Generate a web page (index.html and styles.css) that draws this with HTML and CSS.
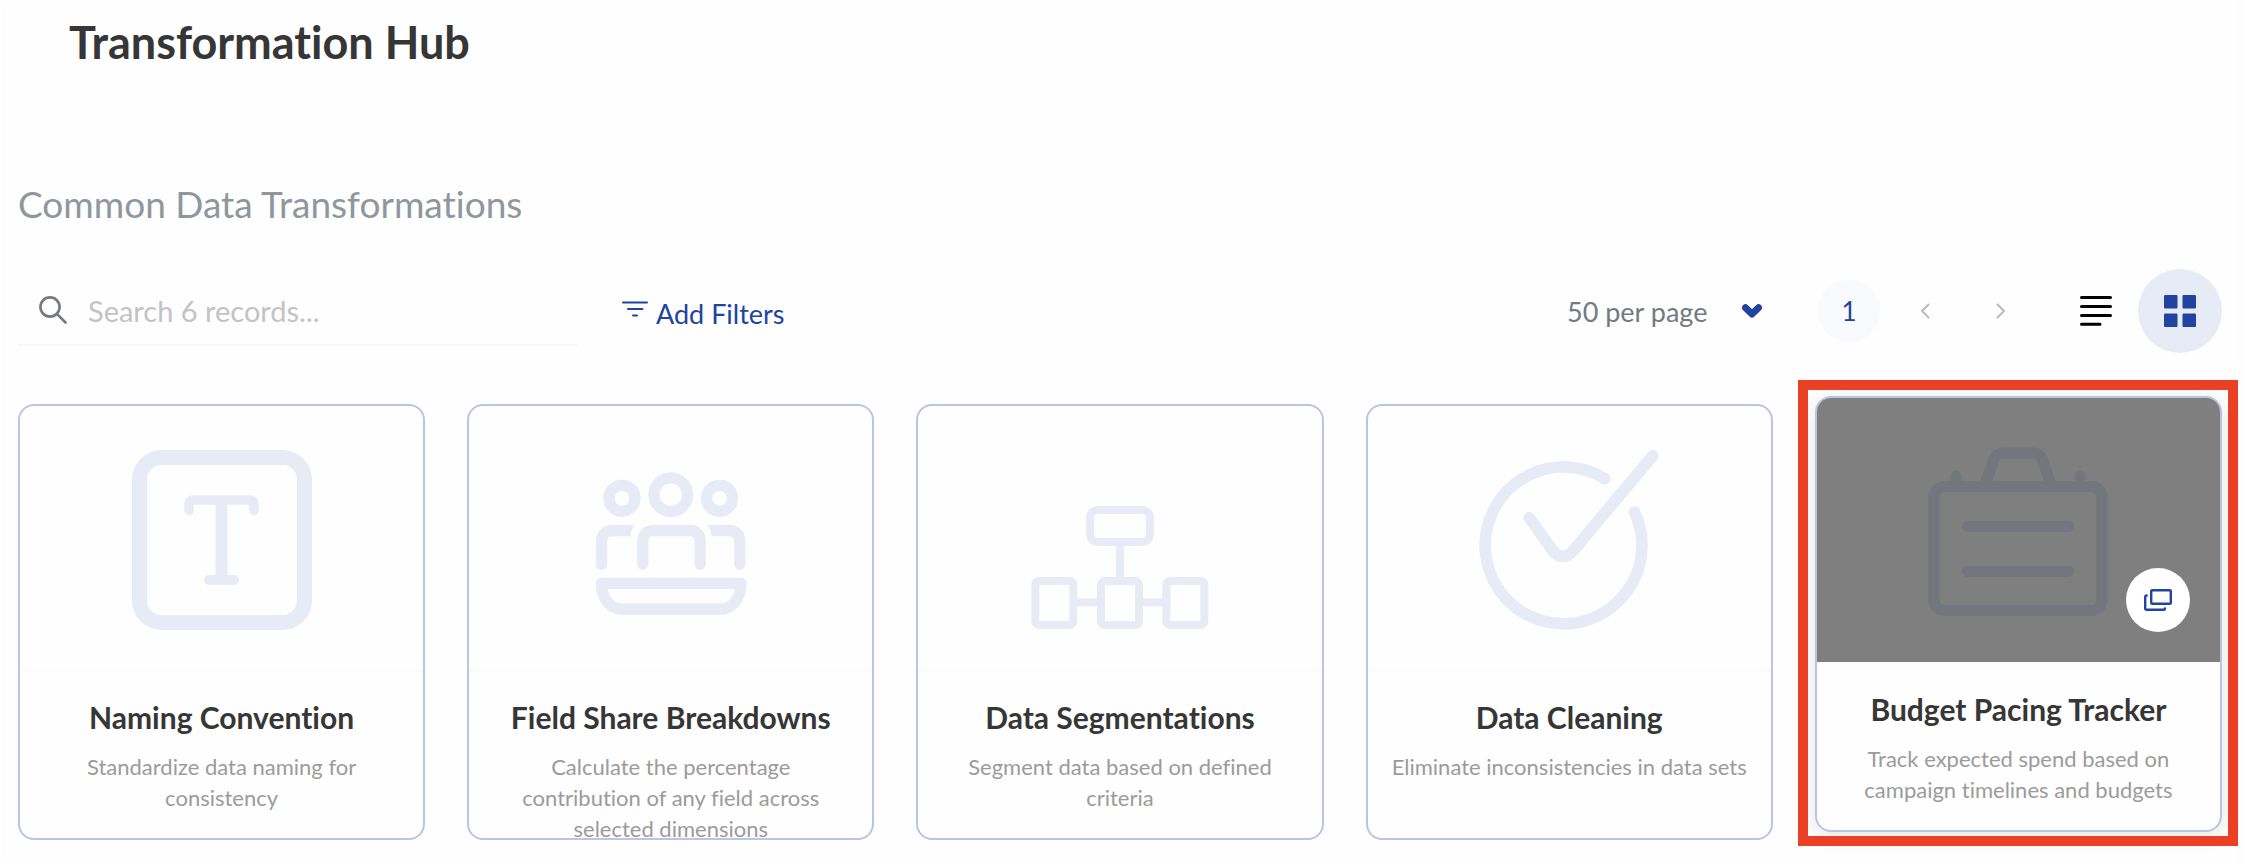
FILE: index.html
```html
<!DOCTYPE html>
<html lang="en">
<head>
<meta charset="utf-8">
<title>Transformation Hub</title>
<link rel="stylesheet" href="styles.css">
</head>
<body>
<main class="page">
  <h1 class="page-title">Transformation Hub</h1>
  <h2 class="section-title">Common Data Transformations</h2>

  <div class="toolbar">
    <label class="search">
      <svg class="search-icon" viewBox="0 0 28 28" aria-hidden="true"><circle cx="11" cy="11" r="9.6"/><path d="M18 18l8.5 8.5"/></svg>
      <input class="search-input" type="search" placeholder="Search 6 records..." aria-label="Search records">
    </label>
    <button class="filter-button" type="button">
      <svg class="filter-icon" viewBox="0 0 26 16" aria-hidden="true"><path d="M1 1.5h24M6 8h14.500M11 14.500h4"/></svg>
      Add Filters
    </button>

    <div class="controls">
      <div class="page-size">
        <select class="page-size-select" aria-label="Records per page"><option>50 per page</option></select>
        <svg class="page-size-arrow" viewBox="0 0 20 14" aria-hidden="true"><path d="M3.500 3.700L10 10L16.500 3.700"/></svg>
      </div>
      <nav class="pager" aria-label="Pages">
        <button class="pager-button pager-current" type="button">1</button>
        <button class="pager-button" type="button" aria-label="Previous page"><svg class="pager-icon" viewBox="0 0 8 14" aria-hidden="true"><path d="M7.500 .5L1 7l6.500 6.500"/></svg></button>
        <button class="pager-button" type="button" aria-label="Next page"><svg class="pager-icon" viewBox="0 0 8 14" aria-hidden="true"><path d="M.5 .5L7 7L.5 13.500"/></svg></button>
      </nav>
      <div class="views">
        <button class="view-button" type="button" aria-label="List view"><svg class="view-icon list-icon" viewBox="0 0 32 32" aria-hidden="true"><path d="M1.500 2.500h29M1.500 11.500h29M1.500 20.500h29M1.500 29.300h18.500"/></svg></button>
        <button class="view-button view-active" type="button" aria-label="Grid view"><svg class="view-icon grid-icon" viewBox="0 0 32 32" aria-hidden="true"><rect width="13.500" height="13.500" rx="1"/><rect x="18.500" width="13.500" height="13.500" rx="1"/><rect y="18.500" width="13.500" height="13.500" rx="1"/><rect x="18.500" y="18.500" width="13.500" height="13.500" rx="1"/></svg></button>
      </div>
    </div>
  </div>

  <ul class="cards">
    <li class="cell">
      <article class="card">
        <div class="art">
          <svg class="art-icon" viewBox="0 0 180 180" aria-hidden="true">
            <rect x="7.500" y="7.500" width="165" height="165" rx="22" stroke-width="15"/>
            <path d="M57 60.500V54Q57 50 61 50H118Q122 50 122 54V60.500" stroke-width="9.500"/>
            <path d="M89.500 50V130" stroke-width="12" stroke-linecap="butt"/>
            <path d="M77 130H102" stroke-width="10"/>
          </svg>
        </div>
        <div class="card-text">
          <h3 class="card-title">Naming Convention</h3>
          <p class="card-note">Standardize data naming for consistency</p>
        </div>
      </article>
    </li>
    <li class="cell">
      <article class="card">
        <div class="art">
          <svg class="art-icon" viewBox="0 0 180 180" stroke-width="11.300" aria-hidden="true">
            <circle cx="41" cy="48.300" r="13"/>
            <circle cx="89.800" cy="44.700" r="16.800"/>
            <circle cx="138.500" cy="48.300" r="13"/>
            <path d="M20.500 114.300V92Q20.500 80.500 32 80.500"/>
            <path class="solid" d="M32 75H53.500C51 78 49.500 82 49.500 86.200H30V75Z"/>
            <path d="M158.800 114.300V92Q158.800 80.500 147 80.500"/>
            <path class="solid" d="M148 75H126C129 78 130.500 82 130.500 86.200H149V75Z"/>
            <path d="M61.800 114.300V92Q61.800 80.500 73 80.500H108Q119.200 80.500 119.200 92V114.300"/>
            <path d="M20.500 133.300H160C160 148 152 159 139 159H41.500C28.500 159 20.500 148 20.500 133.300Z"/>
          </svg>
        </div>
        <div class="card-text">
          <h3 class="card-title">Field Share Breakdowns</h3>
          <p class="card-note">Calculate the percentage contribution of any field across selected dimensions</p>
        </div>
      </article>
    </li>
    <li class="cell">
      <article class="card">
        <div class="art">
          <svg class="art-icon" viewBox="0 0 180 180" stroke-width="8" aria-hidden="true">
            <rect x="60" y="60" width="60" height="32" rx="8"/>
            <path d="M90 94V129" stroke-linecap="butt"/>
            <rect x="5.300" y="131" width="38" height="44" rx="3.500"/>
            <rect x="71" y="131" width="38" height="44" rx="3.500"/>
            <rect x="136.300" y="131" width="38" height="44" rx="3.500"/>
            <path d="M43 152.500H71M109 152.500H136" stroke-linecap="butt"/>
          </svg>
        </div>
        <div class="card-text">
          <h3 class="card-title">Data Segmentations</h3>
          <p class="card-note">Segment data based on defined criteria</p>
        </div>
      </article>
    </li>
    <li class="cell">
      <article class="card">
        <div class="art">
          <svg class="art-icon" viewBox="0 0 180 180" stroke-width="11.700" aria-hidden="true">
            <path d="M125.800 28.700A78.400 78.400 0 1 0 155.500 62"/>
            <path d="M50.200 67.700L74 101Q84 112 94 101L173.800 5.700"/>
          </svg>
        </div>
        <div class="card-text">
          <h3 class="card-title">Data Cleaning</h3>
          <p class="card-note">Eliminate inconsistencies in data sets</p>
        </div>
      </article>
    </li>
    <li class="cell">
      <article class="card card-raised">
        <div class="art">
          <svg class="art-icon" viewBox="0 0 180 180" stroke-width="11.300" aria-hidden="true">
            <rect x="6" y="44.700" width="168" height="123.600" rx="10"/>
            <path d="M39.500 84.300H140.500M39.500 129.300H140.500"/>
            <path d="M28 34V42M152 34V42"/>
            <path d="M58 40L65.500 18Q68.500 11 75.500 11H104.500Q111.500 11 114.500 18L122 40"/>
          </svg>
          <div class="shade">
            <button class="copy-button" type="button" aria-label="Use template"><svg class="copy-icon" viewBox="0 0 28 22" aria-hidden="true"><rect x="7.200" y="1.200" width="19.600" height="13.600" rx="1"/><path d="M2.700 6.500Q1.200 6.500 1.200 8V19.300Q1.200 20.800 2.700 20.800H19.800Q21 20.800 21 19.500"/></svg></button>
          </div>
        </div>
        <div class="card-text">
          <h3 class="card-title">Budget Pacing Tracker</h3>
          <p class="card-note">Track expected spend based on campaign timelines and budgets</p>
        </div>
      </article>
      <div class="marker"></div>
    </li>
  </ul>
</main>
</body>
</html>
```
FILE: styles.css
```css
:root {
  --blue: #2044a0;
  --pale: #e7ebf6;
  --ink: #363636;
}

* {
  box-sizing: border-box;
}

body {
  margin: 0;
  background: #fefefe;
  font-family: Lato, "Open Sans", sans-serif;
  font-variant-ligatures: none;
  color: var(--ink);
}

button,
input,
select {
  font: inherit;
  color: inherit;
  border: 0;
  padding: 0;
  background: none;
  cursor: pointer;
}

svg {
  fill: none;
  stroke: currentColor;
  stroke-linecap: round;
  stroke-linejoin: round;
}

.page {
  min-height: 100vh;
  margin: 0 5px;
  padding: 12px 17px 18px 13px;
  box-shadow: 0 0 6px rgba(0, 0, 0, 0.03);
}

.page-title {
  margin: 0 0 108px 51px;
  font-size: 45px;
  line-height: 60px;
  font-weight: 700;
}

.section-title {
  margin: 0 0 41px;
  font-size: 37px;
  line-height: 48px;
  font-weight: 400;
  color: #8f979e;
}

.toolbar {
  display: flex;
  align-items: center;
  margin-bottom: 51px;
}

.search {
  display: flex;
  align-items: center;
  gap: 21px;
  flex: 0 1 560px;
  height: 70px;
  padding-left: 21px;
  border-bottom: 2px solid #f8f8f8;
}

.search-icon {
  flex: none;
  width: 28px;
  height: 28px;
  stroke-width: 2.6;
  color: #707b84;
}

.search-input {
  flex: 1;
  min-width: 0;
  outline: 0;
  font-size: 29px;
  cursor: text;
}

.search-input::placeholder {
  color: #c3c3c3;
  opacity: 1;
}

.filter-button {
  display: flex;
  align-items: center;
  gap: 8px;
  margin: 4px 0 0 44px;
  font-size: 27px;
  color: var(--blue);
}

.filter-icon {
  width: 26px;
  height: 16px;
  margin-bottom: 8px;
  stroke-width: 2;
}

.controls {
  display: flex;
  align-items: center;
  margin-left: auto;
}

.page-size {
  display: grid;
  align-items: center;
  margin-right: 56px;
  font-size: 27px;
  color: #707b84;
}

.page-size-select {
  grid-area: 1 / 1;
  padding-right: 54px;
  appearance: none;
}

.page-size-arrow {
  grid-area: 1 / 1;
  justify-self: end;
  width: 20px;
  height: 14px;
  stroke-width: 7;
  overflow: visible;
  color: var(--blue);
  pointer-events: none;
}

.pager {
  display: flex;
  gap: 14px;
}

.pager-button {
  display: grid;
  place-items: center;
  width: 62px;
  height: 62px;
  border-radius: 50%;
  font-size: 26px;
  color: #b9bcc0;
}

.pager-current {
  background: #f9fafd;
  color: var(--blue);
}

.pager-icon {
  width: 8px;
  height: 14px;
  stroke-width: 2;
  overflow: visible;
}

.views {
  display: flex;
  margin-left: 22px;
}

.view-button {
  display: grid;
  place-items: center;
  width: 84px;
  height: 84px;
  border-radius: 50%;
  color: #000;
}

.view-active {
  background: var(--pale);
  color: var(--blue);
}

.view-icon {
  width: 32px;
  height: 32px;
}

.list-icon {
  stroke-width: 3;
}

.grid-icon {
  fill: currentColor;
  stroke: none;
}

.cards {
  display: grid;
  grid-template-columns: repeat(5, minmax(0, 1fr));
  gap: 42px;
  margin: 0;
  padding: 0;
  list-style: none;
}

.cell {
  position: relative;
}

.card {
  height: 436px;
  overflow: hidden;
  border: 2px solid #b9c6e3;
  border-radius: 16px;
  background: #fefefe;
}

.card-raised {
  position: relative;
  top: -8px;
  box-shadow: 0 4px 20px rgba(0, 0, 0, 0.1);
}

.art {
  position: relative;
  display: grid;
  place-items: center;
  height: 266px;
  padding-top: 4px;
  border-bottom: 2px solid #fafafa;
}

.card-raised .art {
  border-bottom: 0;
  height: 264px;
  margin-bottom: 2px;
}

.art-icon {
  width: 180px;
  height: 180px;
  color: var(--pale);
}

.card-raised .art-icon {
  color: #e6eefa;
}

.art-icon .solid {
  fill: currentColor;
  stroke: none;
}

.shade {
  position: absolute;
  inset: 0;
  display: flex;
  align-items: flex-end;
  justify-content: flex-end;
  padding: 30px;
  background: rgba(0, 0, 0, 0.5);
}

.copy-button {
  display: grid;
  place-items: center;
  width: 64px;
  height: 64px;
  border-radius: 50%;
  background: #fff;
  color: var(--blue);
}

.copy-icon {
  width: 28px;
  height: 22px;
  stroke-width: 2.4;
}

.card-text {
  padding: 25px 22px 0;
  text-align: center;
}

.card-title {
  margin: 0 0 14px;
  font-size: 30px;
  line-height: 40px;
  font-weight: 700;
}

.card-note {
  margin: 0;
  font-size: 22px;
  line-height: 31px;
  color: #9b9b9b;
}

.marker {
  position: absolute;
  inset: -24px -16px -6px -17px;
  border: 10px solid #ea4025;
  pointer-events: none;
}
```
